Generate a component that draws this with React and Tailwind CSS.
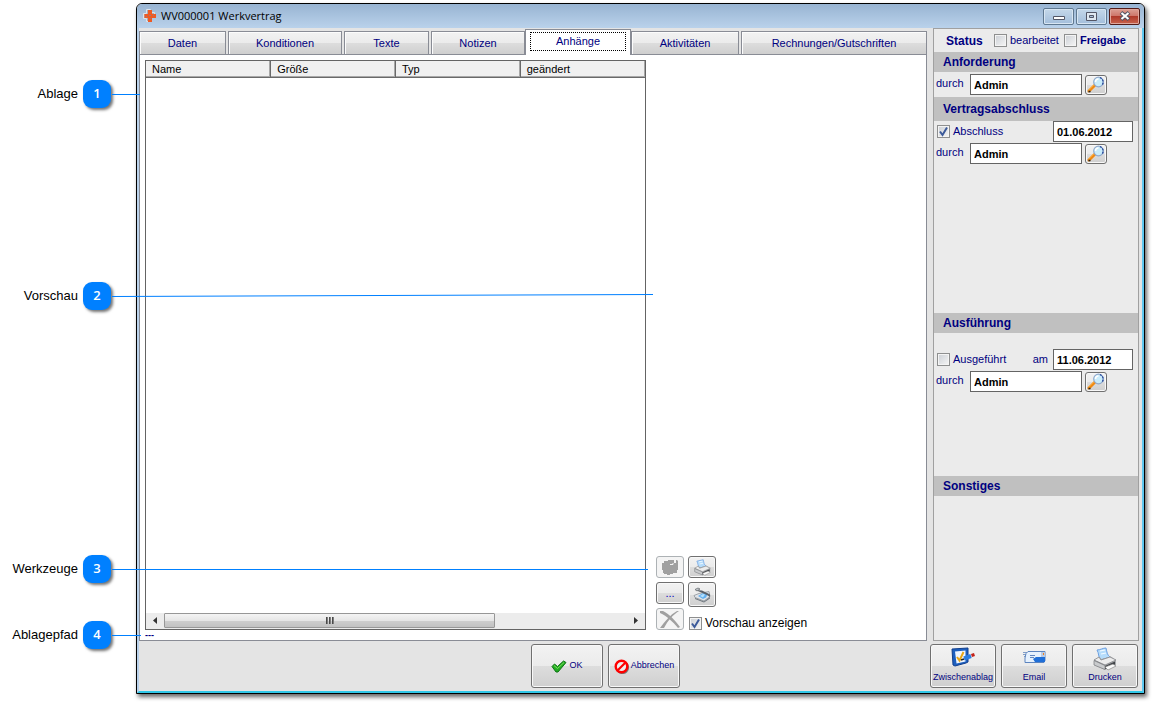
import { useState } from 'react';

const TABS = [
  { name: 'Daten', cls: 'w-[87px]' },
  { name: 'Konditionen', cls: 'w-[114px]' },
  { name: 'Texte', cls: 'w-[85px]' },
  { name: 'Notizen', cls: 'w-[94px]' },
  { name: 'Anhänge', cls: 'w-[106px]' },
  { name: 'Aktivitäten', cls: 'w-[108px]' },
  { name: 'Rechnungen/Gutschriften', cls: 'flex-1' },
];

const COLUMNS = ['Name', 'Größe', 'Typ', 'geändert'];

const CALLOUTS = [
  { no: 1, label: 'Ablage', gap: 'mt-20', length: 28, rise: 0 },
  { no: 2, label: 'Vorschau', gap: 'mt-[174px]', length: 541, rise: 2 },
  { no: 3, label: 'Werkzeuge', gap: 'mt-[245px]', length: 536, rise: 0 },
  { no: 4, label: 'Ablagepfad', gap: 'mt-[38px]', length: 29, rise: 0 },
];

const BTN_CLS = 'rounded-[3px] border border-[#707070] bg-[linear-gradient(#f2f2f2,#ebebeb_50%,#dddddd_50%,#cfcfcf)] shadow-[inset_0_0_0_1px_#f8f8f8] flex items-center justify-center';
const BTN_OFF_CLS = 'rounded-[3px] border border-[#adb2b5] bg-[#f4f4f4] flex items-center justify-center';
const INPUT_CLS = 'h-[21px] border border-[#646464] bg-white px-[3px] text-[11px] font-bold text-black outline-none';

function AppIcon() {
  return (
    <svg width="14" height="14" viewBox="0 0 14 14">
      <path d="M3.500.500h4v3h4v5h-4v4h-4v-3H.500v-5h3z" fill="#a9adb8" stroke="#dfe3e8" strokeWidth="1" />
      <path d="M5 1h4v4h4v4H9v4H5V9H1.500V5H5z" fill="#ee5a24" />
      <path d="M6 6h2v1H6zM3 7h1v1H3zM10 6h1v1h-1zM7 9h1v1H7z" fill="#8e7c86" />
    </svg>
  );
}

function SearchIcon() {
  return (
    <svg width="18" height="17" viewBox="0 0 18 17">
      <path d="M2 15 8 9" stroke="#f08a12" strokeWidth="3" strokeLinecap="round" />
      <path d="M1.600 13.800 7 8.500" stroke="#ffc061" strokeWidth="1" />
      <path d="M1.500 15.500h2" stroke="#222" strokeWidth="1.500" />
      <circle cx="11.500" cy="6" r="4.800" fill="#c9ecfb" stroke="#8fa9cc" strokeWidth="1.200" />
      <path d="M13 1.600a4.800 4.800 0 0 1 2 7.600" fill="none" stroke="#26479b" strokeWidth="1.300" strokeDasharray="2 1" />
      <path d="M8.500 6a3 3 0 0 1 3-3" stroke="#fff" strokeWidth="1.500" fill="none" />
    </svg>
  );
}

function PrinterIcon({ size }) {
  return (
    <svg width={size} height={size} viewBox="0 0 24 24">
      <path d="M4 3c3 0 6-2 9-2 1 4 1 7 4 9l-9 3C5 10 6 6 4 3z" fill="#b5dcfb" stroke="#6d9fe0" strokeWidth="1" />
      <path d="m7 4 5-1M8 7l5-1" stroke="#f2faff" strokeWidth="1.200" />
      <path d="m1 13 6-3 1 2 8-2 1-1 6 4v5l-11 5L1 18z" fill="#a9abae" />
      <path d="m1 13 5-3 2 3 9-3 6 3-11 5z" fill="#ececec" stroke="#86888b" strokeWidth=".8" />
      <path d="m1 13.500 11 5v4L1 18z" fill="#c9cbcd" stroke="#77797c" strokeWidth=".7" />
      <path d="m12 19 10-4.500v3L12 22z" fill="#3f4246" />
      <path d="m12 20 8-3 3 2-8 4z" fill="#fafafa" stroke="#777" strokeWidth=".6" />
    </svg>
  );
}

function ScannerIcon() {
  return (
    <svg width="18" height="16" viewBox="0 0 18 16">
      <path d="m1 8.500 5-2 10-2 1 5-6 4.500-9-3.500z" fill="#dfe3e8" stroke="#8b9298" strokeWidth=".8" />
      <path d="m5 9 5-3 5 .5-2 4-3 1.500z" fill="#62b0f0" />
      <path d="m7 9 3-2 2 .5-2 3z" fill="#b5e0fb" />
      <path d="m2.500 3 6.500.500 8 4v2.500l-3-2-8-3.500z" fill="#596068" />
      <path d="m2 2.500 3-1.500 2 1-3 2z" fill="#c2c6ca" stroke="#5f6469" strokeWidth=".7" />
      <path d="m2 11 9 3.500 6-4.500v1.500l-6 4-9-3.500z" fill="#6d757d" />
    </svg>
  );
}

function PasteOffIcon() {
  return (
    <svg width="18" height="17" viewBox="0 0 18 17">
      <path d="M1 4h2V2h4V1h6v3h2V1h1l1 1v9h-1v3h-4v1H9v1H6v-1H3v-1H2v-3H1z" fill="#a0a0a0" />
      <path d="M9 5.500h3V4" stroke="#f4f4f4" strokeWidth="1" fill="none" />
    </svg>
  );
}

function DeleteOffIcon() {
  return (
    <svg width="22" height="19" viewBox="0 0 22 19">
      <path d="M1 1h3c6 3 12 9 17 16l-2 1C14 12 8 6 1 3z" fill="#a0a0a0" />
      <path d="M18 1h2c-6 4-11 9-15 17H1C6 11 11 5 18 1z" fill="#a0a0a0" />
    </svg>
  );
}

function ClipboardIcon() {
  return (
    <svg width="25" height="20" viewBox="0 0 25 20">
      <path d="m1 2 16-1v14l-2 1-11 3-2-1z" fill="#1d5fbf" stroke="#123f8c" strokeWidth="1" />
      <path d="m4 4.500 10.500-1v11l-9 2z" fill="#eef5ff" />
      <path d="m6 10 2.500 3.500L12.500 5" fill="none" stroke="#e8a617" strokeWidth="2" />
      <path d="M13 11.500 20 9" stroke="#2a7ce0" strokeWidth="4" />
      <path d="m20.500 8.500 3-1" stroke="#c32018" strokeWidth="3" />
      <path d="m10 13 3-1" stroke="#222" strokeWidth="1.500" />
    </svg>
  );
}

function EmailIcon() {
  return (
    <svg width="25" height="14" viewBox="0 0 25 14">
      <path d="M1 2.500h8M1 4.500h6M2 6.500h5M3 8.500h3" stroke="#7f9cc6" strokeWidth="1" />
      <path d="M4 3.500 6 1.500h17v9l-1 2H3V8z" fill="#e6f1fd" stroke="#5c84bf" strokeWidth="1" />
      <path d="M8 5.500h5M8 7.500h4" stroke="#5f86c0" strokeWidth="1" />
      <path d="M19 2h4v5h-4z" fill="#b9cbe6" />
      <path d="M21 3h1v2h-1z" fill="#f2801a" />
      <path d="m11 9 3-2h9v5H13z" fill="#1f6fd8" />
    </svg>
  );
}

function OkIcon() {
  return (
    <svg width="16" height="13" viewBox="0 0 16 13">
      <path d="M1 6.500 3.500 4l3 2.500L12.500 1 15 2.500 7 12H5z" fill="#22ac22" stroke="#0f7415" strokeWidth="1" />
      <path d="m3 5.500 3.500 3L13 2.500" stroke="#7ce05c" strokeWidth="1" fill="none" />
    </svg>
  );
}

function CancelIcon() {
  return (
    <svg width="16" height="15" viewBox="0 0 16 15">
      <circle cx="8.500" cy="8.500" r="5.600" fill="none" stroke="#777" strokeWidth="2" />
      <circle cx="7.500" cy="7.500" r="5.800" fill="#eee" stroke="#f00" strokeWidth="2.400" />
      <path d="m4 11 7-7" stroke="#f00" strokeWidth="2.200" />
    </svg>
  );
}

function CheckField({ id, label, defaultChecked = false, className }) {
  return (
    <div className="flex items-center gap-[3px]">
      <span className="relative size-[13px] shrink-0">
        <input
          id={id}
          type="checkbox"
          defaultChecked={defaultChecked}
          className="peer block size-[13px] appearance-none border border-[#8e8f8f] bg-linear-to-br from-[#cbcfd5] to-[#f6f6f6] shadow-[inset_0_0_0_1px_#f4f4f4]"
        />
        <svg className="pointer-events-none absolute inset-0 hidden peer-checked:block" width="13" height="13" viewBox="0 0 13 13">
          <path d="M3 6.500 5.500 10 10 2.500" fill="none" stroke="#3c5a9a" strokeWidth="2" />
        </svg>
      </span>
      <label htmlFor={id} className={className}>{label}</label>
    </div>
  );
}

function PersonRow({ id }) {
  return (
    <div className="flex h-[21px] items-center pl-0.5">
      <label htmlFor={id} className="w-[34px] pb-0.5 text-[11px]">durch</label>
      <input id={id} type="text" defaultValue="Admin" className={`${INPUT_CLS} w-[112px]`} />
      <button aria-label="Suchen" className={`${BTN_CLS} ml-[3px] h-5 w-[22px]`}>
        <SearchIcon />
      </button>
    </div>
  );
}

function SectionTitle({ children, className = 'h-5' }) {
  return <h2 className={`${className} flex items-center bg-[#c0c0c0] pl-[9px] text-[12px] font-bold`}>{children}</h2>;
}

function Callout({ no, label, gap, length, rise }) {
  return (
    <div className={`${gap} relative flex h-7 items-center justify-end gap-[5px] text-[13px] text-black`}>
      <span>{label}</span>
      <span className="mr-px flex size-7 items-center justify-center rounded-[9px] bg-[#0080ff] font-['Open_Sans',sans-serif] font-semibold text-white shadow-[2px_2px_3px_rgba(0,0,0,0.55)]">{no}</span>
      <svg className="pointer-events-none absolute left-full top-0 z-20" width={length} height="28">
        <line x1="0" y1="14.500" x2={length} y2={14.5 - rise} stroke="#0080ff" strokeWidth="1" />
      </svg>
    </div>
  );
}

function TitleBar() {
  return (
    <header className="flex h-6 items-center bg-linear-to-b from-[#98b4d2] to-[#bad2eb] pl-1.5 pr-1">
      <AppIcon />
      <h1 className="ml-1 flex-1 font-['Open_Sans',sans-serif] text-[11px] text-black">WV000001 Werkvertrag</h1>
      <div className="flex gap-0.5">
        <button aria-label="Minimieren" className="flex h-[17px] w-[31px] items-center justify-center rounded-[2px] border border-[#5f7890] bg-linear-to-b from-[#c5d8ea] to-[#a3bedb] shadow-[inset_0_0_0_1px_#d8e6f3]">
          <svg width="12" height="9" viewBox="0 0 12 9"><path d="M.5 4.500h11v3H.500z" fill="#fff" stroke="#535666" /></svg>
        </button>
        <button aria-label="Maximieren" className="flex h-[17px] w-[31px] items-center justify-center rounded-[2px] border border-[#5f7890] bg-linear-to-b from-[#c5d8ea] to-[#a3bedb] shadow-[inset_0_0_0_1px_#d8e6f3]">
          <svg width="11" height="9" viewBox="0 0 11 9"><path d="M.5.500h10v8H.500z" fill="#dfe8f1" stroke="#535666" /><path d="M3.500 3.500h4v2h-4z" fill="#a8c0da" stroke="#535666" /></svg>
        </button>
        <button aria-label="Schließen" className="flex h-[17px] w-[31px] items-center justify-center rounded-[2px] border border-[#541c18] bg-[linear-gradient(#dc9f94,#cd7468_48%,#b0392a_50%,#c8644e)] shadow-[inset_0_0_0_1px_#e0a79d]">
          <svg width="12" height="10" viewBox="0 0 12 10">
            <path d="m2 1.500 8 7M10 1.500l-8 7" stroke="#535666" strokeWidth="4" />
            <path d="m2.500 2 7 6M9.500 2l-7 6" stroke="#fff" strokeWidth="2" />
          </svg>
        </button>
      </div>
    </header>
  );
}

function FileList() {
  return (
    <div className="flex w-[501px] flex-col border border-[#646464] bg-white">
      <table className="w-full table-fixed border-collapse text-left text-[11px] text-black">
        <thead>
          <tr>
            {COLUMNS.map((c) => (
              <th key={c} className="h-4 border-r border-b border-r-[#696969] border-b-[#696969] bg-[#f0f0f0] p-0 pl-1.5 leading-4 font-normal shadow-[inset_-1px_-1px_0_#a8a8a8] last:border-r-0">{c}</th>
            ))}
          </tr>
        </thead>
      </table>
      <div className="flex-1" />
      <div className="flex h-4 bg-[#ececec] pb-px">
        <button aria-label="Nach links" className="flex w-[18px] items-center justify-center">
          <svg width="4" height="7" viewBox="0 0 4 7"><path d="M4 0v7L0 3.500z" fill="#333" /></svg>
        </button>
        <div className="flex w-[331px] items-center justify-center gap-px rounded-[1px] border border-[#979797] bg-[linear-gradient(#f4f4f4,#e6e6e6_50%,#cfcfcf_50%,#c2c2c2)]">
          <i className="h-[7px] w-0.5 bg-linear-to-r from-[#333] to-[#999]" />
          <i className="h-[7px] w-0.5 bg-linear-to-r from-[#333] to-[#999]" />
          <i className="h-[7px] w-0.5 bg-linear-to-r from-[#333] to-[#999]" />
        </div>
        <button aria-label="Nach rechts" className="ml-auto flex w-[18px] items-center justify-center">
          <svg width="4" height="7" viewBox="0 0 4 7"><path d="M0 0v7l4-3.500z" fill="#333" /></svg>
        </button>
      </div>
    </div>
  );
}

function Tools() {
  return (
    <div className="-mb-px ml-2.5 flex gap-1 self-end">
      <div className="flex flex-col gap-1">
        <button disabled aria-label="Einfügen" className={`${BTN_OFF_CLS} h-[22px] w-7`}><PasteOffIcon /></button>
        <button className={`${BTN_CLS} h-[22px] w-7 text-[11px] text-[#0000c0]`}>...</button>
        <button disabled aria-label="Löschen" className={`${BTN_OFF_CLS} h-[22px] w-7`}><DeleteOffIcon /></button>
      </div>
      <div className="flex flex-col gap-1">
        <button aria-label="Drucken" className={`${BTN_CLS} h-[22px] w-7`}><PrinterIcon size={17} /></button>
        <button aria-label="Scannen" className={`${BTN_CLS} h-[25px] w-7`}><ScannerIcon /></button>
        <div className="mt-1 pl-px">
          <CheckField id="preview" label="Vorschau anzeigen" defaultChecked className="text-[12px] leading-4 text-black" />
        </div>
      </div>
    </div>
  );
}

function Sidebar() {
  return (
    <aside className="flex w-[206px] flex-col border border-[#a0a0a0] bg-[#ebebeb] text-[11px]">
      <div className="flex h-[23px] items-center pl-3">
        <strong className="w-12 text-[12px]">Status</strong>
        <CheckField id="edited" label="bearbeitet" />
        <div className="ml-[5px]">
          <CheckField id="release" label="Freigabe" className="font-bold" />
        </div>
      </div>
      <SectionTitle>Anforderung</SectionTitle>
      <div className="h-[25px] pt-0.5">
        <PersonRow id="requestedBy" />
      </div>
      <SectionTitle className="h-6">Vertragsabschluss</SectionTitle>
      <div className="flex h-48 flex-col gap-px">
        <div className="flex h-[21px] items-center justify-between pl-[3px] pr-[5px]">
          <CheckField id="closed" label="Abschluss" defaultChecked />
          <input aria-label="Abschluss am" type="text" defaultValue="01.06.2012" className={`${INPUT_CLS} w-20`} />
        </div>
        <PersonRow id="closedBy" />
      </div>
      <SectionTitle>Ausführung</SectionTitle>
      <div className="flex h-[143px] flex-col gap-px pt-4">
        <div className="flex h-[21px] items-center pl-[3px] pr-[5px]">
          <CheckField id="done" label="Ausgeführt" />
          <label htmlFor="doneAt" className="ml-auto mr-[5px]">am</label>
          <input id="doneAt" type="text" defaultValue="11.06.2012" className={`${INPUT_CLS} w-20`} />
        </div>
        <PersonRow id="doneBy" />
      </div>
      <SectionTitle>Sonstiges</SectionTitle>
    </aside>
  );
}

export default function App() {
  const [tab, setTab] = useState('Anhänge');

  return (
    <div className="flex min-h-screen bg-white pt-[3px] pr-2 pb-2 font-['Liberation_Sans',Arial,sans-serif] text-[#000080]">
      {/* Callouts */}
      <div className="-mt-[3px] w-28 shrink-0">
        {CALLOUTS.map((c) => <Callout key={c.no} {...c} />)}
      </div>

      {/* Window */}
      <div className="ml-6 flex flex-1 flex-col overflow-hidden rounded-t-[6px] border border-black bg-[#e4e4e4] shadow-[2px_3px_4px_rgba(0,0,0,0.6)]">
        <TitleBar />
        <div className="flex flex-1 flex-col border-x-2 border-b-2 border-l-[#b9d1ea] border-r-[#5fc8f0] border-b-[#30c8e8] pr-[3px]">
          <div className="flex flex-1">
            <main className="mr-1.5 flex flex-1 flex-col">
              <nav role="tablist" className="flex h-[26px] items-end gap-0.5">
                {TABS.map((t) => (
                  <button
                    key={t.name}
                    role="tab"
                    aria-selected={t.name === tab}
                    onClick={() => setTab(t.name)}
                    className={`${t.cls} border-x border-t border-[#898c95] text-[11px] ${
                      t.name === tab
                        ? 'relative z-10 -mx-0.5 -mb-px h-[26px] bg-white px-1 pb-1 pt-0.5'
                        : 'h-[23px] bg-[linear-gradient(#f2f2f2,#ebebeb_50%,#dddddd_50%,#cfcfcf)] shadow-[inset_1px_1px_0_#fcfcfc]'
                    }`}
                  >
                    {t.name === tab ? (
                      <span className="flex h-full items-center justify-center border border-dotted border-black">{t.name}</span>
                    ) : t.name}
                  </button>
                ))}
              </nav>
              <div className="flex flex-1 flex-col border border-[#898c95] bg-white pt-[5px] pl-[5px]">
                <div className="flex flex-1">
                  <FileList />
                  <Tools />
                </div>
                <p className="h-2.5 text-[9px] leading-[10px] font-bold">---</p>
              </div>
            </main>
            <Sidebar />
          </div>

          {/* Footer */}
          <footer className="flex py-[3px] pr-px text-[9px]">
            <button className={`${BTN_CLS} ml-[392px] h-11 w-[72px] gap-0.5`}><OkIcon />OK</button>
            <button className={`${BTN_CLS} ml-[5px] h-11 w-[72px] gap-px`}><CancelIcon />Abbrechen</button>
            <div className="ml-auto flex gap-[5px]">
              <button className={`${BTN_CLS} h-11 w-[66px] flex-col gap-1 overflow-hidden`}><ClipboardIcon />Zwischenablag</button>
              <button className={`${BTN_CLS} h-11 w-[66px] flex-col gap-1`}><span className="flex h-5 items-center"><EmailIcon /></span>Email</button>
              <button className={`${BTN_CLS} h-11 w-[66px] flex-col`}><PrinterIcon size={24} />Drucken</button>
            </div>
          </footer>
        </div>
      </div>
    </div>
  );
}
